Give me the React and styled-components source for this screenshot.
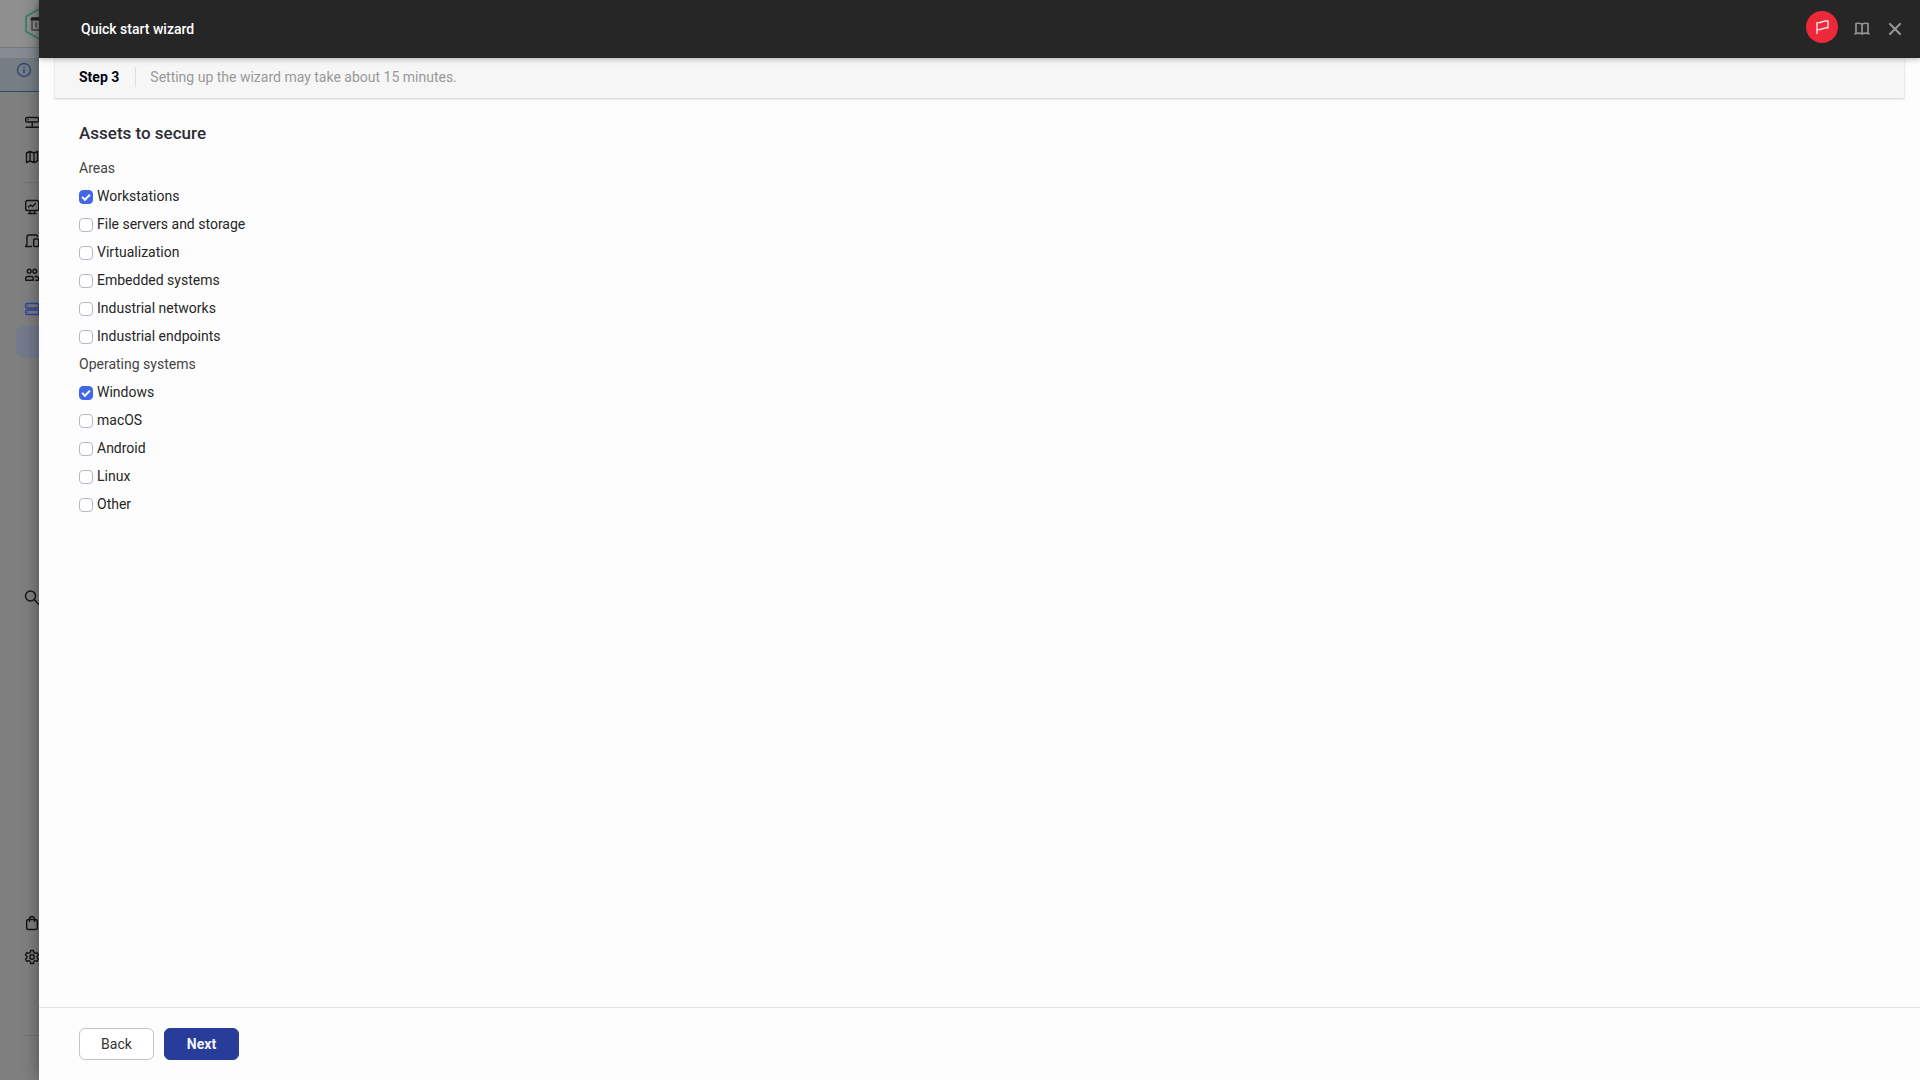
import React, { useState } from "react";
import styled, { createGlobalStyle } from "styled-components";

const GlobalStyle = createGlobalStyle`
  *, *::before, *::after { box-sizing: border-box; }
  body { margin: 0; background: #fdfdfd; }
  body, button, input { font-family: Roboto, "Liberation Sans", sans-serif; font-size: 14px; line-height: 20px; }
`;

const Shell = styled.div`
  display: flex;
  height: 100vh;
  overflow: hidden;
`;

const Rail = styled.aside`
  display: flex;
  flex-direction: column;
  flex: 0 0 39px;
  overflow: hidden;
  background: #7f7f7f;
`;

const RailBrand = styled.div`
  display: flex;
  flex: 0 0 48px;
  align-items: center;
  padding-left: 24px;
  background: #8f8f8f;
  border-bottom: 1px solid #777777;
`;

const RailNotice = styled.div`
  display: flex;
  flex: 0 0 44px;
  align-items: center;
  padding-left: 16px;
  background: linear-gradient(#858b91 10px, #767d83 10px);
  border-bottom: 1px solid #2b4a70;
  color: #2b4a78;
`;

const RailNav = styled.nav`
  display: flex;
  flex: 1;
  flex-direction: column;
  padding: 14px 0 0 24px;
`;

const RailLink = styled.a`
  display: flex;
  flex: none;
  align-items: center;
  height: 34px;
  color: ${(p) => (p.$active ? "#2c449c" : "#141414")};
`;

const RailLine = styled.hr`
  flex: none;
  width: 100%;
  height: 1px;
  margin: ${(p) => p.$gap};
  border: 0;
  background: #727272;
`;

const RailCurrent = styled.div`
  flex: 0 0 32px;
  margin-left: -8px;
  border-radius: 8px 0 0 8px;
  background: #727a8c;
`;

const RailSpace = styled.div`
  flex: ${(p) => p.$grow};
`;

const Glyph = styled.svg`
  display: block;
  flex: none;
  fill: none;
  stroke: currentColor;
  stroke-linecap: round;
  stroke-linejoin: round;
`;

const Drawer = styled.main`
  display: flex;
  flex: 1;
  flex-direction: column;
  min-width: 0;
  background: #fdfdfd;
  box-shadow: 0 0 16px rgba(0, 0, 0, 0.4);
`;

const Header = styled.header`
  z-index: 1;
  display: flex;
  flex: 0 0 58px;
  align-items: center;
  justify-content: space-between;
  padding: 0 16px 0 42px;
  background: #262626;
  box-shadow: 0 1px 6px rgba(0, 0, 0, 0.3);
`;

const Title = styled.h1`
  margin: 0;
  color: #ffffff;
  font-size: 14px;
  font-weight: 500;
  line-height: 20px;
`;

const Actions = styled.div`
  display: flex;
  align-items: center;
  gap: 15px;
  padding-bottom: 4px;
`;

const IconButton = styled.button`
  display: grid;
  place-items: center;
  width: 18px;
  height: 32px;
  padding: 3px 0 0;
  border: 0;
  background: none;
  color: #939393;
`;

const FlagButton = styled(IconButton)`
  width: 32px;
  padding: 0;
  border-radius: 50%;
  background: #ed2939;
  color: #ffffff;
`;

const StepBar = styled.div`
  display: flex;
  flex: 0 0 41px;
  align-items: center;
  margin: 0 15px;
  padding: 0 24px 2px;
  background: #f6f6f6;
  border: 1px solid #ececec;
  border-width: 0 1px 1px;
  border-bottom-color: #dcdcdc;
  border-radius: 0 0 2px 2px;
  box-shadow: 0 1px 2px rgba(0, 0, 0, 0.08);
`;

const StepName = styled.strong`
  padding-right: 16px;
  border-right: 1px solid #dedede;
  color: #050512;
  font-weight: 700;
`;

const StepHint = styled.span`
  padding-left: 14px;
  color: #999999;
`;

const Form = styled.form`
  display: flex;
  flex: 1;
  flex-direction: column;
  min-height: 0;
`;

const Body = styled.div`
  flex: 1;
  min-height: 0;
  padding: 22px 40px;
  overflow: auto;
`;

const Heading = styled.h2`
  margin: 0 0 9px;
  color: #2c2c33;
  font-size: 17px;
  font-weight: 500;
  line-height: 24px;
`;

const Group = styled.fieldset`
  display: flex;
  flex-direction: column;
  margin: 0;
  padding: 0;
  border: 0;
`;

const Legend = styled.legend`
  padding: 0;
  color: #444444;
  line-height: 28px;
`;

const Option = styled.label`
  display: flex;
  align-items: center;
  gap: 4px;
  height: 28px;
  color: #262626;
`;

const Tick = styled.input`
  display: grid;
  place-items: center;
  width: 14px;
  height: 14px;
  margin: 2px 0 0;
  appearance: none;
  border: 1px solid #b5b8c4;
  border-radius: 4px;
  background: #ffffff;

  &:checked {
    border-color: #4168e8;
    background: #4168e8;
  }

  &:checked::after {
    width: 8px;
    height: 5px;
    margin-bottom: 2px;
    border: solid #ffffff;
    border-width: 0 0 2px 2px;
    transform: rotate(-45deg);
    content: "";
  }
`;

const Footer = styled.footer`
  display: flex;
  flex: 0 0 73px;
  align-items: center;
  gap: 10px;
  padding: 0 40px;
  border-top: 1px solid #e4e4e4;
`;

const FooterButton = styled.button`
  width: 75px;
  height: 32px;
  padding: 0;
  border: 1px solid ${(p) => (p.$primary ? "#283c99" : "#c4c4c4")};
  border-radius: 6px;
  background: ${(p) => (p.$primary ? "#283c99" : "#ffffff")};
  color: ${(p) => (p.$primary ? "#f4f5fb" : "#333333")};
  font-weight: ${(p) => (p.$primary ? 700 : 400)};
`;

const Icon = ({ size = 16, stroke = 1.4, children }) => (
  <Glyph width={size} height={size} viewBox="0 0 16 16" strokeWidth={stroke} aria-hidden="true">
    {children}
  </Glyph>
);

const icons = {
  server: (
    <>
      <rect x="1.700" y="2.500" width="13" height="4.500" rx="1.500" />
      <path d="M4.200 4.700h.1M8.200 7v5M2 12.300h12.500M7.200 12.300h2" />
    </>
  ),
  map: <path d="M2.500 4 6 2.500l4 1.500 3.500-1.500V12L10 13.500 6 12l-3.500 1.500zM6 2.500V12M10 4v9.500" />,
  monitor: (
    <>
      <rect x="1.700" y="1.500" width="13" height="10" rx="1.800" />
      <path d="m4.500 8 2-2 2 1.500 3-3M6 12v2.500M10.500 12v2.500M4.500 14.500h7.500" />
    </>
  ),
  devices: (
    <>
      <path d="M3 11V3.500A1.500 1.500 0 0 1 4.500 2H12a1.500 1.500 0 0 1 1.500 1.500M3 11l-1.500 2.500h6" />
      <rect x="9.700" y="6" width="5" height="7.500" rx="1" />
    </>
  ),
  users: (
    <>
      <circle cx="5.200" cy="4.200" r="1.900" />
      <circle cx="10.800" cy="4.200" r="1.900" />
      <path d="M1.700 13.200v-1.700a2 2 0 0 1 2-2h3.500a2 2 0 0 1 2 2v1.700zM11 9.500h1.500a2 2 0 0 1 2 2v1.700h-3" />
    </>
  ),
  racks: (
    <>
      <rect x="1.700" y="2.500" width="13" height="4.500" rx="1.500" />
      <rect x="1.700" y="9" width="13" height="4.500" rx="1.500" />
      <path d="M4 4.750h.1M4 11.250h.1" />
    </>
  ),
  search: (
    <>
      <circle cx="6.500" cy="6" r="5" />
      <path d="m10 9.500 5 5" />
    </>
  ),
  bag: (
    <>
      <rect x="2.700" y="4.500" width="10.600" height="10" rx="1.800" />
      <path d="M5.500 6.500V4a2.500 2.500 0 0 1 5 0v2.500" />
    </>
  ),
  gear: (
    <>
      <path d="M6.700 1.500h2.600l.5 2 1.400.8 2-.6 1.300 2.300L13 7.400v1.200l1.500 1.400-1.300 2.300-2-.6-1.400.8-.5 2H6.700l-.5-2-1.400-.8-2 .6L1.500 10 3 8.600V7.400L1.500 6l1.300-2.300 2 .6 1.400-.8z" />
      <circle cx="8" cy="8" r="2.200" />
    </>
  ),
  info: (
    <>
      <circle cx="8" cy="8" r="6.500" />
      <path d="M8 7.500v3.500M8 4.800v.2" />
    </>
  ),
  flag: <path d="M3 14.500V3.500c4 1.500 6-2.500 11-1.500v7c-5-1-7 3-11 1.500" />,
  book: <path d="M8 3.200C6.500 2.300 4.500 2 2 2.500V12M8 3.200c1.500-.9 3.500-1.200 6-.7V12M8 3.200V13M1 12.700c2.500-.7 5-.7 7 .3 2-1 4.500-1 7-.3" />,
  close: <path d="m3 3 10 10M13 3 3 13" />,
};

const areas = ["Workstations", "File servers and storage", "Virtualization", "Embedded systems", "Industrial networks", "Industrial endpoints"];
const systems = ["Windows", "macOS", "Android", "Linux", "Other"];

const NavItem = ({ name, label, active }) => (
  <RailLink href="#" aria-label={label} $active={active}>
    <Icon>{icons[name]}</Icon>
  </RailLink>
);

const OptionGroup = ({ title, items, selected, onToggle }) => (
  <Group>
    <Legend>{title}</Legend>
    {items.map((item) => (
      <Option key={item}>
        <Tick type="checkbox" checked={selected.includes(item)} onChange={() => onToggle(item)} />
        {item}
      </Option>
    ))}
  </Group>
);

export default function App() {
  const [selected, setSelected] = useState(["Workstations", "Windows"]);
  const toggle = (item) =>
    setSelected((now) => (now.includes(item) ? now.filter((x) => x !== item) : [...now, item]));

  return (
    <Shell>
      <GlobalStyle />
      <Rail>
        <RailBrand>
          <Glyph width="32" height="34" viewBox="0 0 32 34" strokeWidth="1.500" aria-hidden="true">
            <path d="M2 9.500 16 1.500l14 8v15l-14 8-14-8z" stroke="#2e7d6b" />
            <path d="M8 11h16v12H8z" stroke="#444444" />
            <path d="M8 12h16" stroke="#222222" strokeWidth="3" />
            <path d="M12 16v4" stroke="#444444" />
          </Glyph>
        </RailBrand>
        <RailNotice>
          <Icon>{icons.info}</Icon>
        </RailNotice>
        <RailNav>
          <NavItem name="server" label="Server" />
          <NavItem name="map" label="Map" />
          <RailLine $gap="8px 0 7px" />
          <NavItem name="monitor" label="Monitoring" />
          <NavItem name="devices" label="Devices" />
          <NavItem name="users" label="Users" />
          <NavItem name="racks" label="Operations" active />
          <RailCurrent />
          <RailSpace $grow={223} />
          <NavItem name="search" label="Search" />
          <RailSpace $grow={290} />
          <NavItem name="bag" label="Marketplace" />
          <NavItem name="gear" label="Settings" />
          <RailLine $gap="61px 0 44px" />
        </RailNav>
      </Rail>
      <Drawer>
        <Header>
          <Title>Quick start wizard</Title>
          <Actions>
            <FlagButton type="button" aria-label="Flag"><Icon stroke={1.2}>{icons.flag}</Icon></FlagButton>
            <IconButton type="button" aria-label="Help"><Icon stroke={1.7}>{icons.book}</Icon></IconButton>
            <IconButton type="button" aria-label="Close"><Icon stroke={2.2}>{icons.close}</Icon></IconButton>
          </Actions>
        </Header>
        <StepBar>
          <StepName>Step 3</StepName>
          <StepHint>Setting up the wizard may take about 15 minutes.</StepHint>
        </StepBar>
        <Form onSubmit={(e) => e.preventDefault()}>
          <Body>
            <Heading>Assets to secure</Heading>
            <OptionGroup title="Areas" items={areas} selected={selected} onToggle={toggle} />
            <OptionGroup title="Operating systems" items={systems} selected={selected} onToggle={toggle} />
          </Body>
          <Footer>
            <FooterButton type="button">Back</FooterButton>
            <FooterButton type="submit" $primary>Next</FooterButton>
          </Footer>
        </Form>
      </Drawer>
    </Shell>
  );
}
